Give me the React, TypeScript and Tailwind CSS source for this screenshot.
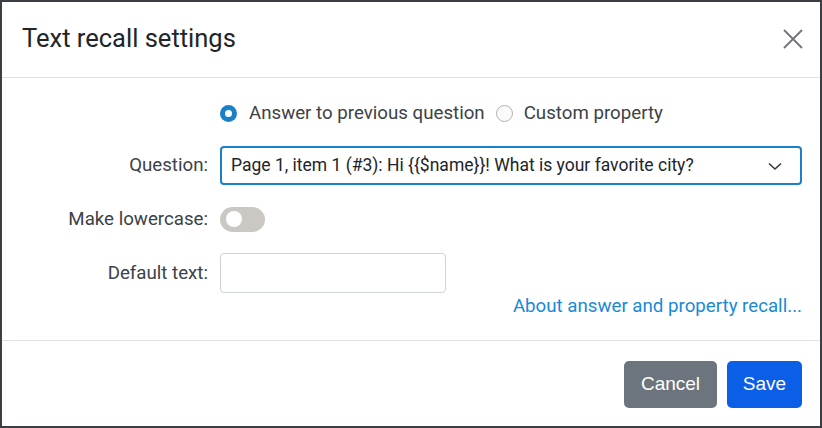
import React from 'react';

const App: React.FC = () => {
  return (
    <div className="w-[822px] h-[428px] bg-white border-2 border-[#3b3e43] flex flex-col text-[#212529] font-['Roboto',sans-serif] overflow-hidden">
      {/* Header */}
      <div className="h-[76px] flex items-center justify-between pl-[20px] pr-[16px] border-b border-[#dee2e6] shrink-0">
        <h1 className="text-[25.5px] font-normal leading-none mt-[-2px]">Text recall settings</h1>
        <svg width="22" height="22" viewBox="0 0 22 22" className="mt-[-2px]">
          <path d="M2 2 L20 20 M20 2 L2 20" stroke="#6f7479" strokeWidth="1.8" />
        </svg>
      </div>

      {/* Body */}
      <div className="flex-1 pl-[20px] pr-[18px] pt-[23px] text-[18.7px]">
        <div className="flex items-center ml-[198px] h-[24px] gap-[11px]">
          <label className="flex items-center gap-[12px]">
            <span className="w-[17px] h-[17px] rounded-full bg-[#1a80c7] flex items-center justify-center">
              <span className="w-[7px] h-[7px] rounded-full bg-white" />
            </span>
            <span className="text-[#3d4246]">Answer to previous question</span>
          </label>
          <label className="flex items-center gap-[11px]">
            <span className="w-[17px] h-[17px] rounded-full border border-[#b5b0ab] bg-[#fafafa]" />
            <span className="text-[#3d4246]">Custom property</span>
          </label>
        </div>

        <div className="grid grid-cols-[186px_1fr] gap-x-[12px] items-center mt-[21px]">
          <div className="text-right text-[#3d4246]">Question:</div>
          <div className="h-[39px] border-2 border-[#1a80c7] rounded-[4px] flex items-center justify-between pl-[9px] pr-[17px]">
            <span className="text-[#212529] text-[17.5px]">Page 1, item 1 (#3): Hi {'{{$name}}'}! What is your favorite city?</span>
            <svg width="16" height="14" viewBox="0 0 16 14">
              <path d="M2 4.5 L8 10 L14 4.5" stroke="#343a40" strokeWidth="1.6" fill="none" />
            </svg>
          </div>

          <div className="text-right text-[#3d4246] mt-[20px]">Make lowercase:</div>
          <div className="mt-[20px] h-[25px] flex items-center">
            <span className="w-[45px] h-[25px] rounded-full bg-[#cbc7c3] flex items-center pl-[6px]">
              <span className="w-[16px] h-[16px] rounded-full bg-white" />
            </span>
          </div>

          <div className="text-right text-[#3d4246] mt-[20px]">Default text:</div>
          <div className="mt-[20px]">
            <div className="w-[226px] h-[40px] border border-[#ced4da] rounded-[4px] bg-white" />
          </div>
        </div>

        <div className="flex justify-end mt-[-1px]">
          <a className="text-[#1a8ad3]">About answer and property recall...</a>
        </div>
      </div>

      {/* Footer */}
      <div className="h-[86px] border-t border-[#dee2e6] flex items-start justify-end gap-[10px] pt-[20px] pr-[18px] shrink-0">
        <button className="h-[47px] w-[93px] rounded-[5px] bg-[#6c757d] text-white text-[19px] font-['Liberation_Sans',sans-serif]">Cancel</button>
        <button className="h-[47px] w-[75px] rounded-[5px] bg-[#0b5ee6] text-white text-[19px] font-['Liberation_Sans',sans-serif]">Save</button>
      </div>
    </div>
  );
};

export default App;
